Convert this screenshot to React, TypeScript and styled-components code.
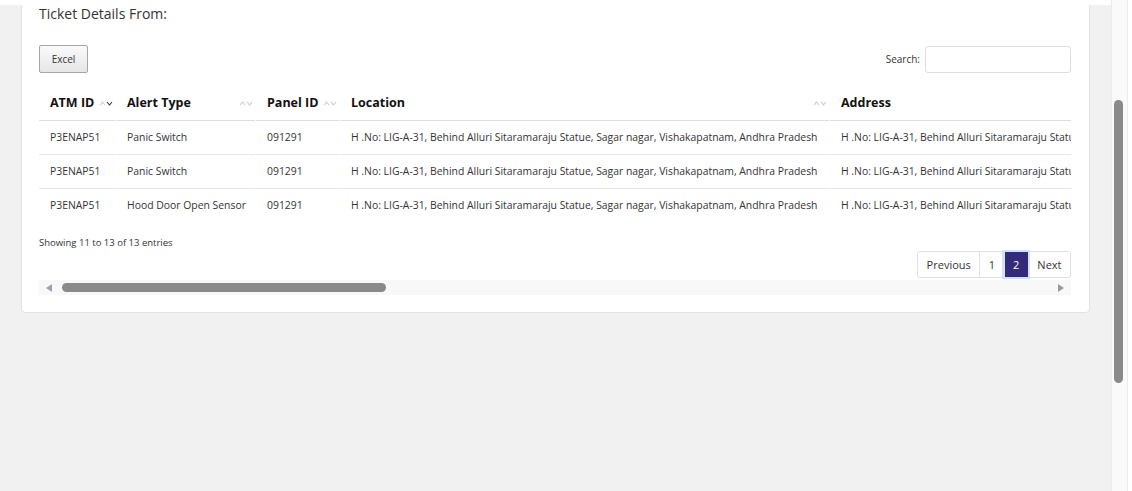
import styled, { createGlobalStyle } from "styled-components";

const GlobalStyle = createGlobalStyle`
  html, body {
    margin: 0;
    padding: 0;
  }
  body {
    background: #f1f1f1;
    font-family: "Open Sans", "Liberation Sans", sans-serif;
    color: #222;
    overflow: hidden;
  }
`;

const Page = styled.div`
  display: flex;
  height: 100vh;
`;

const Main = styled.main`
  flex: 1;
  min-width: 0;
  display: flex;
  flex-direction: column;
`;

const TopStrip = styled.div`
  height: 5px;
  background: #fff;
  flex-shrink: 0;
`;

const Content = styled.div`
  padding: 0 21px;
`;

const Card = styled.section`
  background: #fff;
  border: 1px solid #e2e2e2;
  border-top: none;
  border-radius: 0 0 5px 5px;
  padding: 0 18px 17px 17px;
`;

const Title = styled.h4`
  margin: 0;
  font-size: 14px;
  line-height: 18px;
  font-weight: 400;
  color: #333;
`;

const Controls = styled.div`
  margin-top: 22px;
  height: 28px;
  display: flex;
  justify-content: space-between;
  align-items: center;
`;

const ExcelButton = styled.button`
  height: 28px;
  width: 49px;
  padding: 0;
  font-family: inherit;
  font-size: 10px;
  color: #333;
  border: 1px solid #a6a6a6;
  border-radius: 2px;
  background: linear-gradient(to bottom, #fafafa, #e6e6e6);
`;

const SearchLabel = styled.label`
  display: flex;
  align-items: center;
  gap: 5px;
  font-size: 10px;
  color: #333;
`;

const SearchInput = styled.input`
  width: 146px;
  height: 27px;
  box-sizing: border-box;
  border: 1px solid #dedede;
  border-radius: 3px;
  outline: none;
`;

const TableClip = styled.div`
  margin-top: 13px;
  overflow: hidden;
`;

const Table = styled.table`
  border-collapse: separate;
  border-spacing: 1px 0;
  table-layout: fixed;
  margin-left: -1px;
`;

const Th = styled.th<{ $w: number }>`
  width: ${(p) => p.$w}px;
  box-sizing: border-box;
  text-align: left;
  font-size: 12.5px;
  font-weight: 700;
  color: #111;
  line-height: 14px;
  padding: 10px 2px 10px 11px;
  border-bottom: 1px solid #dddddd;
  white-space: nowrap;
`;

const HeadInner = styled.div`
  display: flex;
  align-items: center;
  justify-content: space-between;
`;

const Td = styled.td`
  font-size: 10.4px;
  color: #333;
  line-height: 13px;
  padding: 10px 11px;
  border-bottom: 1px solid #e6e6e6;
  white-space: nowrap;
  overflow: hidden;

  tr:last-child > & {
    border-bottom: none;
  }
`;

const Footer = styled.div`
  display: flex;
  flex-direction: column;
`;

const Info = styled.div`
  margin-top: 14px;
  font-size: 9.5px;
  line-height: 14px;
  color: #333;
`;

const Pagination = styled.div`
  align-self: flex-end;
  margin-top: 1px;
  display: flex;
  border: 1px solid #dee2e6;
  border-radius: 3px;
`;

const PageButton = styled.span<{ $active?: boolean }>`
  padding: 0 8.5px;
  line-height: 25px;
  font-size: 11px;
  color: ${(p) => (p.$active ? "#fff" : "#333")};
  background: ${(p) => (p.$active ? "#35297a" : "transparent")};
  box-shadow: ${(p) => (p.$active ? "0 0 0 2px #cfe0fb" : "none")};
  & + & {
    border-left: 1px solid #dee2e6;
  }
`;

const HScroll = styled.div`
  margin-top: 2px;
  height: 15px;
  background: #f8f8f8;
  display: flex;
  align-items: center;
  padding: 0 7px;
`;

const Arrow = styled.span<{ $dir: "left" | "right" }>`
  width: 0;
  height: 0;
  border-top: 4.5px solid transparent;
  border-bottom: 4.5px solid transparent;
  ${(p) =>
    p.$dir === "left"
      ? "border-right: 6px solid #9aa3ab;"
      : "border-left: 6px solid #9a9a9a; margin-left: auto;"}
`;

const HThumb = styled.span`
  margin-left: 10px;
  width: 324px;
  height: 9px;
  border-radius: 5px;
  background: #8a8a8a;
`;

const Rail = styled.div`
  width: 15px;
  background: #fafafa;
  border-left: 1px solid #ececec;
  border-right: 1px solid #ececec;
`;

const RailEdge = styled.div`
  width: 4px;
  background: #fff;
`;

const VThumb = styled.div`
  margin: 100px 0 0 2px;
  width: 9px;
  height: 283px;
  border-radius: 5px;
  background: #8a8a8a;
`;

function SortIcon({ active }: { active?: boolean }) {
  return (
    <svg width="14" height="8" viewBox="0 0 14 8">
      <polyline points="1,6 3.5,3 6,6" fill="none" stroke="#c8c8c8" strokeWidth="1.1" />
      <polyline
        points="8,3 10.5,6 13,3"
        fill="none"
        stroke={active ? "#333" : "#c8c8c8"}
        strokeWidth="1.1"
      />
    </svg>
  );
}

const address =
  "H .No: LIG-A-31, Behind Alluri Sitaramaraju Statue, Sagar nagar, Vishakapatnam, Andhra Pradesh";

const columns = [
  { label: "ATM ID", w: 76 },
  { label: "Alert Type", w: 139 },
  { label: "Panel ID", w: 83 },
  { label: "Location", w: 489 },
  { label: "Address", w: 489 },
  { label: "City", w: 130 },
  { label: "State", w: 140 },
  { label: "Zone", w: 110 },
  { label: "Alert Date Time", w: 170 },
  { label: "Closed Date Time", w: 170 },
  { label: "Status", w: 110 },
  { label: "Remarks", w: 240 },
];

const rows = [
  ["P3ENAP51", "Panic Switch", "091291", address, address, "Vishakapatnam", "Andhra Pradesh", "South", "2024-05-14 10:21:07", "2024-05-14 10:45:12", "Closed", "Attended by site engineer"],
  ["P3ENAP51", "Panic Switch", "091291", address, address, "Vishakapatnam", "Andhra Pradesh", "South", "2024-05-14 11:02:44", "2024-05-14 11:30:09", "Closed", "Attended by site engineer"],
  ["P3ENAP51", "Hood Door Open Sensor", "091291", address, address, "Vishakapatnam", "Andhra Pradesh", "South", "2024-05-14 12:15:31", "2024-05-14 12:40:58", "Closed", "Attended by site engineer"],
];

const tableWidth = columns.reduce((s, c) => s + c.w + 1, 1);

export default function App() {
  return (
    <>
      <GlobalStyle />
      <Page>
        <Main>
          <TopStrip />
          <Content>
            <Card>
              <Title>Ticket Details From:</Title>
              <Controls>
                <ExcelButton>Excel</ExcelButton>
                <SearchLabel>
                  Search:
                  <SearchInput type="search" />
                </SearchLabel>
              </Controls>
              <TableClip>
                <Table style={{ width: tableWidth }}>
                  <thead>
                    <tr>
                      {columns.map((c, i) => (
                        <Th key={c.label} $w={c.w}>
                          <HeadInner>
                            {c.label}
                            <SortIcon active={i === 0} />
                          </HeadInner>
                        </Th>
                      ))}
                    </tr>
                  </thead>
                  <tbody>
                    {rows.map((r, i) => (
                      <tr key={i}>
                        {r.map((cell, j) => (
                          <Td key={j}>{cell}</Td>
                        ))}
                      </tr>
                    ))}
                  </tbody>
                </Table>
              </TableClip>
              <Footer>
                <Info>Showing 11 to 13 of 13 entries</Info>
                <Pagination>
                  <PageButton>Previous</PageButton>
                  <PageButton>1</PageButton>
                  <PageButton $active>2</PageButton>
                  <PageButton>Next</PageButton>
                </Pagination>
              </Footer>
              <HScroll>
                <Arrow $dir="left" />
                <HThumb />
                <Arrow $dir="right" />
              </HScroll>
            </Card>
          </Content>
        </Main>
        <Rail>
          <VThumb />
        </Rail>
        <RailEdge />
      </Page>
    </>
  );
}
